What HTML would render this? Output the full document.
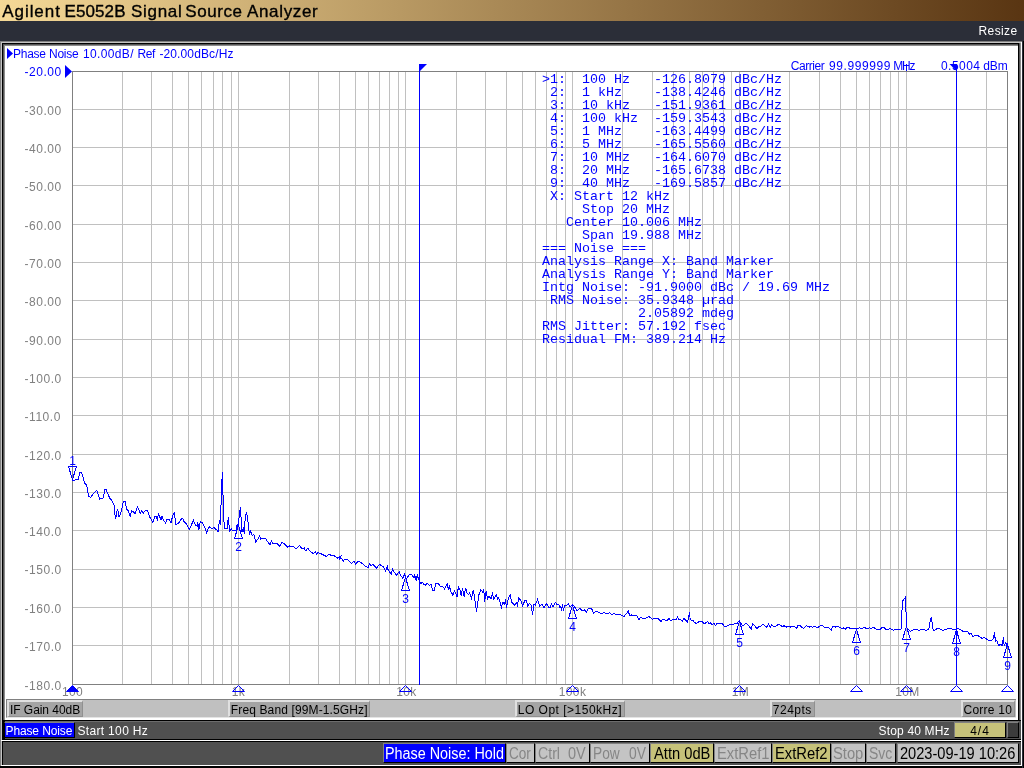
<!DOCTYPE html>
<html><head><meta charset="utf-8"><title>E5052B</title>
<style>
html,body{margin:0;padding:0;}
body{will-change:transform;width:1024px;height:768px;overflow:hidden;background:#fff;font-family:"Liberation Sans",sans-serif;position:relative;}
div{position:absolute;box-sizing:border-box;white-space:nowrap;}
.t{white-space:pre;}
#tb{left:0;top:0;width:1024px;height:21px;background:linear-gradient(90deg,#f5d997 0%,#593512 100%);}
#db{left:0;top:21px;width:1024px;height:20px;background:#2b2e38;}
.xl{top:684px;width:60px;text-align:center;font-size:12px;line-height:16px;color:#808080;letter-spacing:0.4px;}
#mt{left:542px;top:73px;font-family:"Liberation Mono",monospace;font-size:13.333px;line-height:13px;color:#0000ff;white-space:pre;margin:0;}
.mk{font-family:"Liberation Sans",sans-serif;font-size:12px;fill:#0000ff;text-anchor:middle;}
svg{position:absolute;left:0;top:0;}
#f0{left:0;top:41px;width:1024px;height:727px;background:#808080;}
#f1{left:1px;top:42px;width:1021px;height:724px;background:#c4c4c4;}
#f2{left:2px;top:43px;width:1017px;height:723px;background:#000;}
#f3{left:3px;top:44px;width:1016px;height:676px;background:#555;}
#f3b{left:4px;top:45px;width:1016px;height:675px;background:#8c8c8c;}
#f4{left:5px;top:46px;width:1013px;height:674px;background:#fff;}
#sb{left:6px;top:699px;width:1010px;height:19px;background:#c0c0c0;border-top:1px solid #808080;border-left:1px solid #808080;border-bottom:1px solid #e4e4e4;}
.sbx{top:700px;height:17px;background:#a4a4a4;border-top:2px solid #e0e0e0;border-left:2px solid #e0e0e0;border-right:1px solid #909090;border-bottom:1px solid #909090;}
#r2{left:3px;top:720px;width:1018px;height:19px;background:#505050;border-top:1px solid #000;border-left:2px solid #000;}
#r2b{left:5px;top:721px;width:1014px;height:1px;background:#6c6c6c;}
#r3{left:2px;top:741px;width:1019px;height:24px;background:#505050;border-top:1px solid #000;border-left:1px solid #000;}
</style></head><body>
<div id="tb"></div><div class="t" style="left:2.2px;top:0.61px;font-size:17px;line-height:21px;letter-spacing:0.96px;color:#000;-webkit-text-stroke:0.35px #000;">Agilent</div><div class="t" style="left:64.5px;top:0.61px;font-size:17px;line-height:21px;letter-spacing:0.1px;color:#000;-webkit-text-stroke:0.35px #000;">E5052B</div><div class="t" style="left:131.0px;top:0.61px;font-size:17px;line-height:21px;letter-spacing:0.7px;color:#000;-webkit-text-stroke:0.35px #000;">Signal</div><div class="t" style="left:185.2px;top:0.61px;font-size:17px;line-height:21px;letter-spacing:0.6px;color:#000;-webkit-text-stroke:0.35px #000;">Source</div><div class="t" style="left:247.0px;top:0.61px;font-size:17px;line-height:21px;letter-spacing:0.66px;color:#000;-webkit-text-stroke:0.35px #000;">Analyzer</div>
<div id="db"></div><div class="t" style="left:978.5px;top:22.84px;font-size:12px;line-height:16px;letter-spacing:0.4px;color:#fff;">Resize</div>
<div id="f0"></div><div id="f1"></div><div id="f2"></div><div id="f3"></div><div id="f3b"></div><div id="f4"></div>
<svg width="1024" height="768" viewBox="0 0 1024 768">
<rect x="122" y="71" width="1" height="614" fill="#c0c0c0"/>
<rect x="151" y="71" width="1" height="614" fill="#c0c0c0"/>
<rect x="172" y="71" width="1" height="614" fill="#c0c0c0"/>
<rect x="188" y="71" width="1" height="614" fill="#c0c0c0"/>
<rect x="201" y="71" width="1" height="614" fill="#c0c0c0"/>
<rect x="213" y="71" width="1" height="614" fill="#c0c0c0"/>
<rect x="222" y="71" width="1" height="614" fill="#c0c0c0"/>
<rect x="231" y="71" width="1" height="614" fill="#c0c0c0"/>
<rect x="238" y="71" width="1" height="614" fill="#c0c0c0"/>
<rect x="289" y="71" width="1" height="614" fill="#c0c0c0"/>
<rect x="318" y="71" width="1" height="614" fill="#c0c0c0"/>
<rect x="339" y="71" width="1" height="614" fill="#c0c0c0"/>
<rect x="355" y="71" width="1" height="614" fill="#c0c0c0"/>
<rect x="368" y="71" width="1" height="614" fill="#c0c0c0"/>
<rect x="379" y="71" width="1" height="614" fill="#c0c0c0"/>
<rect x="389" y="71" width="1" height="614" fill="#c0c0c0"/>
<rect x="398" y="71" width="1" height="614" fill="#c0c0c0"/>
<rect x="405" y="71" width="1" height="614" fill="#c0c0c0"/>
<rect x="456" y="71" width="1" height="614" fill="#c0c0c0"/>
<rect x="485" y="71" width="1" height="614" fill="#c0c0c0"/>
<rect x="506" y="71" width="1" height="614" fill="#c0c0c0"/>
<rect x="522" y="71" width="1" height="614" fill="#c0c0c0"/>
<rect x="535" y="71" width="1" height="614" fill="#c0c0c0"/>
<rect x="546" y="71" width="1" height="614" fill="#c0c0c0"/>
<rect x="556" y="71" width="1" height="614" fill="#c0c0c0"/>
<rect x="565" y="71" width="1" height="614" fill="#c0c0c0"/>
<rect x="572" y="71" width="1" height="614" fill="#c0c0c0"/>
<rect x="622" y="71" width="1" height="614" fill="#c0c0c0"/>
<rect x="652" y="71" width="1" height="614" fill="#c0c0c0"/>
<rect x="673" y="71" width="1" height="614" fill="#c0c0c0"/>
<rect x="689" y="71" width="1" height="614" fill="#c0c0c0"/>
<rect x="702" y="71" width="1" height="614" fill="#c0c0c0"/>
<rect x="713" y="71" width="1" height="614" fill="#c0c0c0"/>
<rect x="723" y="71" width="1" height="614" fill="#c0c0c0"/>
<rect x="731" y="71" width="1" height="614" fill="#c0c0c0"/>
<rect x="739" y="71" width="1" height="614" fill="#c0c0c0"/>
<rect x="789" y="71" width="1" height="614" fill="#c0c0c0"/>
<rect x="819" y="71" width="1" height="614" fill="#c0c0c0"/>
<rect x="840" y="71" width="1" height="614" fill="#c0c0c0"/>
<rect x="856" y="71" width="1" height="614" fill="#c0c0c0"/>
<rect x="869" y="71" width="1" height="614" fill="#c0c0c0"/>
<rect x="880" y="71" width="1" height="614" fill="#c0c0c0"/>
<rect x="890" y="71" width="1" height="614" fill="#c0c0c0"/>
<rect x="898" y="71" width="1" height="614" fill="#c0c0c0"/>
<rect x="906" y="71" width="1" height="614" fill="#c0c0c0"/>
<rect x="956" y="71" width="1" height="614" fill="#c0c0c0"/>
<rect x="986" y="71" width="1" height="614" fill="#c0c0c0"/>
<rect x="72" y="109" width="936" height="1" fill="#c0c0c0"/>
<rect x="72" y="147" width="936" height="1" fill="#c0c0c0"/>
<rect x="72" y="185" width="936" height="1" fill="#c0c0c0"/>
<rect x="72" y="224" width="936" height="1" fill="#c0c0c0"/>
<rect x="72" y="262" width="936" height="1" fill="#c0c0c0"/>
<rect x="72" y="300" width="936" height="1" fill="#c0c0c0"/>
<rect x="72" y="339" width="936" height="1" fill="#c0c0c0"/>
<rect x="72" y="377" width="936" height="1" fill="#c0c0c0"/>
<rect x="72" y="415" width="936" height="1" fill="#c0c0c0"/>
<rect x="72" y="454" width="936" height="1" fill="#c0c0c0"/>
<rect x="72" y="492" width="936" height="1" fill="#c0c0c0"/>
<rect x="72" y="530" width="936" height="1" fill="#c0c0c0"/>
<rect x="72" y="569" width="936" height="1" fill="#c0c0c0"/>
<rect x="72" y="607" width="936" height="1" fill="#c0c0c0"/>
<rect x="72" y="645" width="936" height="1" fill="#c0c0c0"/>
<rect x="72" y="71" width="936" height="1" fill="#808080"/>
<rect x="72" y="684" width="936" height="1" fill="#808080"/>
<rect x="72" y="71" width="1" height="614" fill="#808080"/>
<rect x="1007" y="71" width="1" height="614" fill="#808080"/>
<path d="M72.50 479.00 L73.00 481.12 L75.25 479.88 L78.38 479.25 L79.62 472.38 L81.50 472.38 L82.75 475.50 L84.62 483.00 L86.50 484.88 L87.75 490.50 L88.38 496.12 L90.88 497.38 L92.75 494.25 L96.75 490.50 L99.62 499.25 L103.38 498.00 L104.62 489.88 L106.25 489.88 L109.62 498.00 L111.50 499.88 L114.00 504.88 L115.50 519.25 L117.50 508.62 L119.00 516.75 L120.88 513.00 L123.38 501.75 L125.25 501.75 L126.50 509.25 L128.38 510.50 L130.25 516.75 L131.50 510.50 L133.38 511.75 L135.25 513.62 L137.50 506.75 L140.25 513.00 L141.50 511.12 L143.38 513.00 L145.25 510.50 L147.50 510.50 L149.62 516.75 L153.00 522.38 L154.62 516.75 L156.50 516.75 L157.50 520.50 L158.38 513.00 L160.88 519.88 L162.12 516.12 L163.38 519.88 L165.50 523.00 L167.12 519.25 L169.00 519.25 L170.88 523.00 L172.75 515.50 L174.25 513.00 L175.88 524.25 L178.38 523.62 L181.50 518.62 L183.38 519.25 L184.00 521.62 L186.50 524.12 L189.25 529.75 L193.38 520.38 L195.25 524.75 L197.12 526.00 L197.75 521.62 L198.75 530.38 L200.25 521.62 L202.12 522.25 L204.62 527.25 L206.50 532.88 L209.00 526.62 L212.12 528.50 L214.00 527.25 L215.88 529.75 L216.75 529.12 L218.00 532.25 L219.62 519.75 L220.50 524.75 L221.50 486.00 L222.50 472.25 L223.00 494.75 L223.75 496.00 L224.00 522.25 L224.75 528.50 L227.12 528.50 L228.38 517.25 L229.62 532.25 L231.25 528.50 L232.12 530.38 L235.88 530.75 L237.12 524.12 L238.00 527.25 L239.62 512.25 L240.50 507.25 L241.25 521.00 L241.75 532.25 L243.38 528.50 L244.38 533.50 L245.25 516.00 L246.50 512.88 L247.75 518.50 L248.38 527.25 L249.62 534.75 L250.50 531.00 L252.12 535.38 L254.00 534.75 L255.88 542.25 L259.62 536.00 L260.50 539.12 L265.25 538.25 L270.00 544.75 L271.50 541.00 L273.00 543.50 L277.12 543.50 L279.62 546.00 L282.12 542.25 L284.00 543.50 L287.75 547.25 L289.62 546.00 L293.38 546.62 L295.88 549.12 L299.62 545.38 L302.12 549.12 L304.00 547.88 L304.00 549.38 L305.88 550.62 L307.75 548.12 L309.62 550.62 L313.38 553.75 L315.25 551.88 L316.50 554.38 L317.75 552.50 L321.50 554.00 L326.50 556.50 L329.00 554.38 L332.12 555.62 L334.00 555.62 L337.75 558.12 L340.88 556.25 L339.62 559.38 L341.50 558.12 L343.38 561.25 L344.62 559.38 L347.12 559.38 L351.50 563.75 L354.00 561.25 L355.88 564.38 L357.75 561.25 L360.88 562.50 L365.25 566.00 L368.00 567.50 L369.62 563.75 L370.88 565.62 L372.75 564.38 L376.75 568.12 L379.38 564.38 L383.38 566.88 L385.50 571.25 L387.50 566.25 L388.00 569.38 L391.25 574.38 L392.50 569.38 L394.00 571.88 L396.50 575.00 L399.62 571.25 L400.25 575.00 L402.75 578.12 L404.62 574.38 L406.50 578.75 L409.62 574.38 L411.50 574.38 L414.00 578.12 L414.62 574.38 L416.50 581.25 L417.12 574.38 L418.38 578.75 L420.88 583.75 L422.12 581.88 L424.00 584.62 L425.25 585.25 L427.12 583.38 L429.62 585.88 L430.88 584.00 L432.50 590.25 L434.00 590.88 L435.88 583.75 L438.38 583.75 L440.25 586.25 L443.38 587.12 L444.62 589.00 L447.12 583.75 L448.38 589.00 L449.25 585.88 L450.88 591.50 L452.75 595.00 L454.62 590.88 L455.88 593.38 L457.12 597.12 L458.38 586.50 L460.25 590.88 L461.25 595.88 L462.50 588.38 L464.25 597.12 L465.50 587.75 L467.12 593.38 L468.38 594.62 L469.62 592.75 L471.50 598.38 L473.38 589.62 L474.62 597.75 L476.50 612.12 L477.75 602.75 L479.00 594.62 L480.88 589.62 L482.75 592.12 L483.75 589.62 L484.62 602.12 L486.12 591.50 L487.50 599.00 L489.00 595.88 L490.88 599.00 L492.50 594.00 L493.75 599.00 L496.12 594.62 L497.75 599.00 L498.75 597.75 L501.50 607.12 L503.00 602.12 L504.62 604.62 L505.50 599.00 L506.50 608.38 L508.38 597.75 L510.25 595.25 L511.50 602.12 L514.62 605.25 L516.50 602.75 L517.50 605.25 L518.75 597.75 L520.88 600.88 L522.75 605.88 L524.62 600.88 L526.25 600.25 L527.75 605.88 L529.62 603.38 L531.25 605.25 L532.50 614.62 L534.00 604.00 L535.25 605.25 L537.50 599.62 L539.62 605.88 L542.12 604.00 L544.00 608.12 L546.50 603.75 L548.38 606.88 L550.00 608.12 L551.50 603.75 L553.00 606.88 L555.50 602.50 L557.12 605.00 L558.75 604.38 L560.00 608.12 L560.88 606.25 L561.75 610.62 L562.50 604.38 L563.38 610.62 L564.62 605.62 L567.12 605.00 L568.38 603.50 L570.25 606.88 L572.50 604.38 L575.00 607.50 L577.12 610.62 L579.62 608.12 L582.12 610.62 L584.62 610.00 L586.50 612.50 L588.38 608.12 L591.50 608.12 L593.38 613.12 L596.50 611.25 L598.38 612.25 L601.50 613.50 L604.00 612.50 L606.50 613.75 L609.62 612.75 L611.50 614.38 L614.00 613.75 L617.75 615.00 L620.25 614.38 L624.00 616.50 L628.38 611.25 L629.62 615.62 L631.50 615.00 L633.38 616.00 L636.50 615.25 L639.00 619.38 L640.88 616.88 L642.75 618.50 L645.88 618.12 L649.00 616.50 L652.75 619.38 L654.62 618.12 L658.38 618.75 L660.88 621.50 L662.75 619.38 L664.00 619.75 L667.12 620.38 L669.00 618.50 L670.88 620.75 L672.75 619.12 L674.62 620.00 L676.50 619.12 L677.50 617.25 L678.75 619.75 L680.25 619.12 L682.12 621.25 L683.75 618.50 L685.88 620.38 L687.50 622.25 L688.75 616.00 L689.50 612.25 L690.25 619.75 L692.75 620.38 L694.62 622.50 L696.50 623.50 L699.62 621.25 L702.12 621.62 L703.75 623.50 L705.88 622.88 L707.50 621.25 L709.00 624.12 L710.50 622.88 L712.12 624.75 L714.00 623.50 L715.50 625.38 L717.12 623.50 L719.62 623.75 L722.12 623.25 L724.62 626.62 L727.12 626.00 L730.25 624.12 L732.12 625.00 L734.62 623.50 L737.12 623.25 L739.38 620.38 L740.88 623.50 L742.75 626.00 L745.88 623.25 L747.75 624.75 L751.25 629.12 L752.75 623.50 L754.25 625.00 L756.75 628.50 L759.00 626.62 L760.88 626.00 L762.75 624.12 L764.00 624.75 L766.50 627.25 L768.38 624.12 L770.25 627.25 L771.50 624.75 L773.38 626.62 L775.25 626.25 L779.00 624.12 L782.12 626.62 L784.00 625.75 L786.50 627.00 L789.00 626.25 L790.88 627.25 L792.75 626.25 L794.62 626.62 L796.50 628.50 L798.00 625.38 L799.62 625.38 L801.50 627.00 L803.75 628.50 L806.50 625.38 L809.00 627.25 L810.88 626.25 L812.75 627.25 L814.62 626.25 L817.12 627.88 L819.00 626.62 L821.25 625.00 L823.00 625.75 L824.25 627.00 L826.50 627.88 L827.75 627.00 L831.25 630.38 L832.50 626.62 L834.00 626.25 L835.88 627.25 L837.75 626.25 L839.62 627.25 L841.50 628.50 L843.38 627.88 L845.25 629.12 L847.75 627.00 L850.25 628.50 L855.25 628.50 L856.50 629.12 L859.00 627.88 L862.12 628.50 L864.62 627.25 L867.12 629.12 L869.62 627.88 L871.50 628.75 L873.00 627.00 L876.50 629.50 L880.25 629.12 L882.12 627.25 L884.00 627.50 L885.88 629.50 L888.38 629.12 L890.25 628.50 L893.38 630.38 L895.25 629.50 L896.00 629.25 L901.00 629.25 L901.62 614.50 L902.88 600.75 L905.38 597.25 L906.00 612.00 L907.00 628.25 L908.50 629.50 L910.38 631.75 L912.25 630.12 L916.62 629.25 L918.50 630.50 L921.62 629.25 L924.12 629.25 L926.00 630.50 L928.75 629.25 L930.38 620.12 L931.62 617.00 L932.50 628.25 L934.12 630.50 L936.62 628.88 L939.12 628.25 L942.88 630.75 L945.38 629.50 L948.50 628.25 L951.00 628.25 L954.12 630.12 L957.25 628.25 L960.38 629.50 L963.50 631.75 L967.88 631.75 L969.75 634.50 L971.00 633.25 L972.50 636.38 L977.25 635.12 L982.25 638.50 L984.12 637.25 L988.50 640.50 L991.62 640.50 L993.50 638.25 L994.50 632.00 L995.38 641.38 L996.62 640.12 L998.50 645.75 L1001.00 643.88 L1002.00 645.75 L1003.50 637.00 L1004.12 645.75 L1005.75 642.62 L1007.62 647.00" fill="none" stroke="#0000ff" stroke-width="1" stroke-linejoin="miter" shape-rendering="crispEdges"/>
<rect x="419" y="64" width="1" height="621" fill="#0000ff"/>
<path d="M419 64 H427 L420 71 H419 Z" fill="#0000ff"/>
<rect x="956" y="64" width="1" height="621" fill="#0000ff"/>
<path d="M957 64 H949.5 L956 70.5 H957 Z" fill="#0000ff"/>
<rect x="955" y="631" width="3" height="3" fill="#0000ff"/>
<rect x="906" y="64" width="1" height="7" fill="#0000ff"/>
<path d="M72.5 479.5 L68.5 466.5 H76.5 Z" fill="none" stroke="#0000ff" stroke-width="1" shape-rendering="crispEdges"/>
<text x="72.5" y="465" class="mk">1</text>
<path d="M238.5 525.5 L234.5 538.5 H242.5 Z" fill="none" stroke="#0000ff" stroke-width="1" shape-rendering="crispEdges"/>
<text x="238.5" y="551" class="mk">2</text>
<path d="M405.5 577.5 L401.5 590.5 H409.5 Z" fill="none" stroke="#0000ff" stroke-width="1" shape-rendering="crispEdges"/>
<text x="405.5" y="603" class="mk">3</text>
<path d="M572.5 605.5 L568.5 618.5 H576.5 Z" fill="none" stroke="#0000ff" stroke-width="1" shape-rendering="crispEdges"/>
<text x="572.5" y="631" class="mk">4</text>
<path d="M739.5 621.5 L735.5 634.5 H743.5 Z" fill="none" stroke="#0000ff" stroke-width="1" shape-rendering="crispEdges"/>
<text x="739.5" y="647" class="mk">5</text>
<path d="M856.5 629.5 L852.5 642.5 H860.5 Z" fill="none" stroke="#0000ff" stroke-width="1" shape-rendering="crispEdges"/>
<text x="856.5" y="655" class="mk">6</text>
<path d="M906.5 626.5 L902.5 639.5 H910.5 Z" fill="none" stroke="#0000ff" stroke-width="1" shape-rendering="crispEdges"/>
<text x="906.5" y="652" class="mk">7</text>
<path d="M956.5 630.5 L952.5 643.5 H960.5 Z" fill="none" stroke="#0000ff" stroke-width="1" shape-rendering="crispEdges"/>
<text x="956.5" y="656" class="mk">8</text>
<path d="M1007.5 644.5 L1003.5 657.5 H1011.5 Z" fill="none" stroke="#0000ff" stroke-width="1" shape-rendering="crispEdges"/>
<text x="1007.5" y="670" class="mk">9</text>
</svg>
<div class="t" style="left:13.1px;top:45.84px;font-size:12px;line-height:16px;letter-spacing:-0.28px;color:#0000ff;">Phase</div><div class="t" style="left:49.0px;top:45.84px;font-size:12px;line-height:16px;letter-spacing:-0.25px;color:#0000ff;">Noise</div><div class="t" style="left:83.0px;top:45.84px;font-size:12px;line-height:16px;letter-spacing:0.36px;color:#0000ff;">10.00dB/</div><div class="t" style="left:137.5px;top:45.84px;font-size:12px;line-height:16px;letter-spacing:-0.4px;color:#0000ff;">Ref</div><div class="t" style="left:159.4px;top:45.84px;font-size:12px;line-height:16px;letter-spacing:0.12px;color:#0000ff;">-20.00dBc/Hz</div>
<svg width="80" height="90" viewBox="0 0 80 90"><path d="M7 48 L13 53.5 L7 59 Z" fill="#0000ff"/><path d="M65 65 L72 71.5 L65 78 Z" fill="#0000ff"/></svg>
<div class="t" style="left:24.6px;top:63.84px;font-size:12px;line-height:16px;letter-spacing:0.52px;color:#0000ff;">-20.00</div>
<div class="t" style="left:24.6px;top:102.84px;font-size:12px;line-height:16px;letter-spacing:0.52px;color:#808080;">-30.00</div>
<div class="t" style="left:24.6px;top:140.84px;font-size:12px;line-height:16px;letter-spacing:0.52px;color:#808080;">-40.00</div>
<div class="t" style="left:24.6px;top:178.84px;font-size:12px;line-height:16px;letter-spacing:0.52px;color:#808080;">-50.00</div>
<div class="t" style="left:24.6px;top:217.84px;font-size:12px;line-height:16px;letter-spacing:0.52px;color:#808080;">-60.00</div>
<div class="t" style="left:24.6px;top:255.84px;font-size:12px;line-height:16px;letter-spacing:0.52px;color:#808080;">-70.00</div>
<div class="t" style="left:24.6px;top:293.84px;font-size:12px;line-height:16px;letter-spacing:0.52px;color:#808080;">-80.00</div>
<div class="t" style="left:24.6px;top:332.84px;font-size:12px;line-height:16px;letter-spacing:0.52px;color:#808080;">-90.00</div>
<div class="t" style="left:24.6px;top:370.84px;font-size:12px;line-height:16px;letter-spacing:0.52px;color:#808080;">-100.0</div>
<div class="t" style="left:24.6px;top:408.84px;font-size:12px;line-height:16px;letter-spacing:0.52px;color:#808080;">-110.0</div>
<div class="t" style="left:24.6px;top:447.84px;font-size:12px;line-height:16px;letter-spacing:0.52px;color:#808080;">-120.0</div>
<div class="t" style="left:24.6px;top:485.84px;font-size:12px;line-height:16px;letter-spacing:0.52px;color:#808080;">-130.0</div>
<div class="t" style="left:24.6px;top:523.84px;font-size:12px;line-height:16px;letter-spacing:0.52px;color:#808080;">-140.0</div>
<div class="t" style="left:24.6px;top:561.84px;font-size:12px;line-height:16px;letter-spacing:0.52px;color:#808080;">-150.0</div>
<div class="t" style="left:24.6px;top:600.84px;font-size:12px;line-height:16px;letter-spacing:0.52px;color:#808080;">-160.0</div>
<div class="t" style="left:24.6px;top:638.84px;font-size:12px;line-height:16px;letter-spacing:0.52px;color:#808080;">-170.0</div>
<div class="t" style="left:24.6px;top:677.84px;font-size:12px;line-height:16px;letter-spacing:0.52px;color:#808080;">-180.0</div>
<div class="xl" style="left:42.5px">100</div>
<div class="xl" style="left:208.5px">1k</div>
<div class="xl" style="left:376.5px">10k</div>
<div class="xl" style="left:542.5px">100k</div>
<div class="xl" style="left:710.5px">1M</div>
<div class="xl" style="left:877.5px">10M</div>
<svg width="1024" height="768" viewBox="0 0 1024 768"><path d="M72.5 685.5 L66.5 691.5 H78.5 Z" fill="#0000ff" stroke="#0000ff" stroke-width="1"/>
<path d="M238.5 685.5 L232.5 691.5 H244.5 Z" fill="none" stroke="#0000ff" stroke-width="1"/>
<path d="M405.5 685.5 L399.5 691.5 H411.5 Z" fill="none" stroke="#0000ff" stroke-width="1"/>
<path d="M572.5 685.5 L566.5 691.5 H578.5 Z" fill="none" stroke="#0000ff" stroke-width="1"/>
<path d="M739.5 685.5 L733.5 691.5 H745.5 Z" fill="none" stroke="#0000ff" stroke-width="1"/>
<path d="M856.5 685.5 L850.5 691.5 H862.5 Z" fill="none" stroke="#0000ff" stroke-width="1"/>
<path d="M906.5 685.5 L900.5 691.5 H912.5 Z" fill="none" stroke="#0000ff" stroke-width="1"/>
<path d="M956.5 685.5 L950.5 691.5 H962.5 Z" fill="none" stroke="#0000ff" stroke-width="1"/>
<path d="M1007.5 685.5 L1001.5 691.5 H1013.5 Z" fill="none" stroke="#0000ff" stroke-width="1"/></svg>
<div class="t" style="left:790.8px;top:57.84px;font-size:12px;line-height:16px;letter-spacing:-0.46px;color:#0000ff;">Carrier</div><div class="t" style="left:829.0px;top:57.84px;font-size:12px;line-height:16px;letter-spacing:0.59px;color:#0000ff;">99.999999</div><div class="t" style="left:893.2px;top:57.84px;font-size:12px;line-height:16px;letter-spacing:-1.12px;color:#0000ff;">MHz</div><div class="t" style="left:941.0px;top:57.84px;font-size:12px;line-height:16px;letter-spacing:0.45px;color:#0000ff;">0.5004</div><div class="t" style="left:983.2px;top:57.84px;font-size:12px;line-height:16px;letter-spacing:0.0px;color:#0000ff;">dBm</div>
<pre id="mt" style="position:absolute">&gt;1:  100 Hz   -126.8079 dBc/Hz
 2:  1 kHz    -138.4246 dBc/Hz
 3:  10 kHz   -151.9361 dBc/Hz
 4:  100 kHz  -159.3543 dBc/Hz
 5:  1 MHz    -163.4499 dBc/Hz
 6:  5 MHz    -165.5560 dBc/Hz
 7:  10 MHz   -164.6070 dBc/Hz
 8:  20 MHz   -165.6738 dBc/Hz
 9:  40 MHz   -169.5857 dBc/Hz
 X: Start 12 kHz
     Stop 20 MHz
   Center 10.006 MHz
     Span 19.988 MHz
=== Noise ===
Analysis Range X: Band Marker
Analysis Range Y: Band Marker
Intg Noise: -91.9000 dBc / 19.69 MHz
 RMS Noise: 35.9348 µrad
            2.05892 mdeg
RMS Jitter: 57.192 fsec
Residual FM: 389.214 Hz</pre>
<div id="sb"></div>
<div class="sbx" style="left:7px;width:76px"></div>
<div class="sbx" style="left:228px;width:142px"></div>
<div class="sbx" style="left:515px;width:110px"></div>
<div class="sbx" style="left:770px;width:45px"></div>
<div class="sbx" style="left:961px;width:54px"></div>
<div class="t" style="left:10.0px;top:701.84px;font-size:12px;line-height:16px;letter-spacing:-0.05px;color:#000;">IF Gain 40dB</div>
<div class="t" style="left:230.8px;top:701.84px;font-size:12px;line-height:16px;letter-spacing:0.13px;color:#000;">Freq Band [99M-1.5GHz]</div>
<div class="t" style="left:517.8px;top:701.84px;font-size:12px;line-height:16px;letter-spacing:0.49px;color:#000;">LO Opt [&gt;150kHz]</div>
<div class="t" style="left:772.8px;top:701.84px;font-size:12px;line-height:16px;letter-spacing:0.5px;color:#000;">724pts</div>
<div class="t" style="left:963.5px;top:701.84px;font-size:12px;line-height:16px;letter-spacing:0.25px;color:#000;">Corre 10</div>
<div id="r2"></div><div id="r2b"></div>
<div style="left:4px;top:722px;width:71px;height:16px;background:#0000ff;border:1px solid #000;border-top-color:#808080;border-left-color:#808080;border-left-color:#000;"></div>
<div class="t" style="left:5.5px;top:722.84px;font-size:12px;line-height:16px;letter-spacing:-0.12px;color:#fff;">Phase Noise</div>
<div class="t" style="left:77.4px;top:722.84px;font-size:12px;line-height:16px;letter-spacing:0.34px;color:#fff;">Start 100 Hz</div>
<div class="t" style="left:878.6px;top:722.84px;font-size:12px;line-height:16px;letter-spacing:0.16px;color:#fff;">Stop 40 MHz</div>
<div style="left:954px;top:722px;width:52px;height:16px;background:#c6c27a;border:1px solid #000;border-top-color:#808080;border-left-color:#808080;"></div>
<div class="t" style="left:970.2px;top:722.84px;font-size:12px;line-height:16px;letter-spacing:0.98px;color:#000;">4/4</div>
<div style="left:1007px;top:722px;width:12px;height:16px;background:#3c3c3c;border:1px solid #000;border-top-color:#808080;border-left-color:#808080;"></div>
<div style="left:2px;top:739px;width:1019px;height:1px;background:#000"></div>
<div style="left:1px;top:740px;width:1021px;height:1px;background:#fff"></div>
<div id="r3"></div>
<div style="left:383px;top:743px;width:123px;height:20px;background:#0000ff;border:1px solid #000;border-top-color:#808080;border-left-color:#808080;"></div>
<div class="t" style="left:384.8px;top:744.36px;font-size:16px;line-height:20px;letter-spacing:0.0px;color:#fff;transform-origin:0 0;transform:scaleX(0.898);">Phase Noise: Hold</div>
<div style="left:506px;top:743px;width:29px;height:20px;background:#c4c4c4;border:1px solid #000;border-top-color:#808080;border-left-color:#808080;"></div>
<div class="t" style="left:509.0px;top:744.36px;font-size:16px;line-height:20px;letter-spacing:0.0px;color:#868686;transform-origin:0 0;transform:scaleX(0.848);">Cor</div>
<div style="left:535px;top:743px;width:55px;height:20px;background:#c4c4c4;border:1px solid #000;border-top-color:#808080;border-left-color:#808080;"></div>
<div class="t" style="left:538.0px;top:744.36px;font-size:16px;line-height:20px;letter-spacing:0.0px;color:#868686;transform-origin:0 0;transform:scaleX(0.883);">Ctrl</div>
<div class="t" style="left:568.4px;top:744.36px;font-size:16px;line-height:20px;letter-spacing:0.0px;color:#868686;transform-origin:0 0;transform:scaleX(0.905);">0V</div>
<div style="left:590px;top:743px;width:60px;height:20px;background:#c4c4c4;border:1px solid #000;border-top-color:#808080;border-left-color:#808080;"></div>
<div class="t" style="left:592.7px;top:744.36px;font-size:16px;line-height:20px;letter-spacing:0.0px;color:#868686;transform-origin:0 0;transform:scaleX(0.857);">Pow</div>
<div class="t" style="left:628.6px;top:744.36px;font-size:16px;line-height:20px;letter-spacing:0.0px;color:#868686;transform-origin:0 0;transform:scaleX(0.863);">0V</div>
<div style="left:650px;top:743px;width:64px;height:20px;background:#c6c27a;border:1px solid #000;border-top-color:#808080;border-left-color:#808080;"></div>
<div class="t" style="left:654.0px;top:744.36px;font-size:16px;line-height:20px;letter-spacing:0.0px;color:#000;transform-origin:0 0;transform:scaleX(0.918);">Attn 0dB</div>
<div style="left:714px;top:743px;width:58px;height:20px;background:#c4c4c4;border:1px solid #000;border-top-color:#808080;border-left-color:#808080;"></div>
<div class="t" style="left:716.7px;top:744.36px;font-size:16px;line-height:20px;letter-spacing:0.0px;color:#868686;transform-origin:0 0;transform:scaleX(0.922);">ExtRef1</div>
<div style="left:772px;top:743px;width:59px;height:20px;background:#c6c27a;border:1px solid #000;border-top-color:#808080;border-left-color:#808080;"></div>
<div class="t" style="left:774.6px;top:744.36px;font-size:16px;line-height:20px;letter-spacing:0.0px;color:#000;transform-origin:0 0;transform:scaleX(0.924);">ExtRef2</div>
<div style="left:831px;top:743px;width:35px;height:20px;background:#c4c4c4;border:1px solid #000;border-top-color:#808080;border-left-color:#808080;"></div>
<div class="t" style="left:832.8px;top:744.36px;font-size:16px;line-height:20px;letter-spacing:0.0px;color:#868686;transform-origin:0 0;transform:scaleX(0.921);">Stop</div>
<div style="left:866px;top:743px;width:30px;height:20px;background:#c4c4c4;border:1px solid #000;border-top-color:#808080;border-left-color:#808080;"></div>
<div class="t" style="left:869.2px;top:744.36px;font-size:16px;line-height:20px;letter-spacing:0.0px;color:#868686;transform-origin:0 0;transform:scaleX(0.872);">Svc</div>
<div style="left:897px;top:743px;width:122px;height:20px;background:#c4c4c4;border:1px solid #000;border-top-color:#808080;border-left-color:#808080;"></div>
<div class="t" style="left:899.6px;top:744.36px;font-size:16px;line-height:20px;letter-spacing:0.0px;color:#000;transform-origin:0 0;transform:scaleX(0.913);">2023-09-19 10:26</div>
<div style="left:1px;top:765px;width:1021px;height:1px;background:#fff"></div>
<div style="left:0;top:766px;width:1024px;height:2px;background:#000"></div>
<div style="left:1018px;top:43px;width:1px;height:677px;background:#000"></div>
<div style="left:1019px;top:43px;width:1px;height:677px;background:#555"></div>
<div style="left:1020px;top:43px;width:1px;height:677px;background:#8c8c8c"></div>
<div style="left:1021px;top:42px;width:1px;height:724px;background:#fff"></div>
<div style="left:1022px;top:41px;width:1px;height:727px;background:#2b2e38"></div>
<div style="left:1023px;top:41px;width:1px;height:727px;background:#000"></div>
</body></html>
